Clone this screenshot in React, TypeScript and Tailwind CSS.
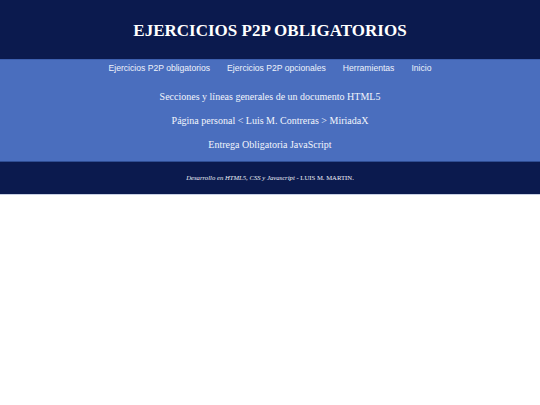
export default function App() {
  return (
    <div className="w-full min-h-[405px] bg-white">
      <header className="h-[59px] bg-[#0b1a4e] flex items-center justify-center pt-[1px]">
        <h1 className="text-white font-bold text-[17px] leading-none font-['Liberation_Serif',serif]">
          EJERCICIOS P2P OBLIGATORIOS
        </h1>
      </header>
      <div className="h-px bg-[#3d5fae]" />
      <section className="bg-[#4a6ebe] flex flex-col pb-[4px]">
        <nav className="h-[17px] flex items-center justify-center gap-[17px] text-[8.6px] text-[#eef2fb] font-['Liberation_Sans',Arial,sans-serif]">
          <span>Ejercicios P2P obligatorios</span>
          <span>Ejercicios P2P opcionales</span>
          <span>Herramientas</span>
          <span>Inicio</span>
        </nav>
        <div className="mt-[8px] flex flex-col items-center text-[10px] text-[#f2f5fc] font-['Liberation_Serif',serif]">
          <p className="h-[24px] leading-[24px]">Secciones y líneas generales de un documento HTML5</p>
          <p className="h-[24px] leading-[24px]">Página personal &lt; Luis M. Contreras &gt; MiriadaX</p>
          <p className="h-[24px] leading-[24px]">Entrega Obligatoria JavaScript</p>
        </div>
      </section>
      <div className="h-px bg-[#2f4d93]" />
      <footer className="h-[32px] bg-[#0b1a4e] flex items-center justify-center text-[6.7px] text-[#eef1f8] font-['Liberation_Serif',serif]">
        <span>
          <em>Desarrollo en HTML5, CSS y Javascript</em> - LUIS M. MARTIN.
        </span>
      </footer>
      <div className="h-px bg-[#c8d0e4]" />
    </div>
  );
}
